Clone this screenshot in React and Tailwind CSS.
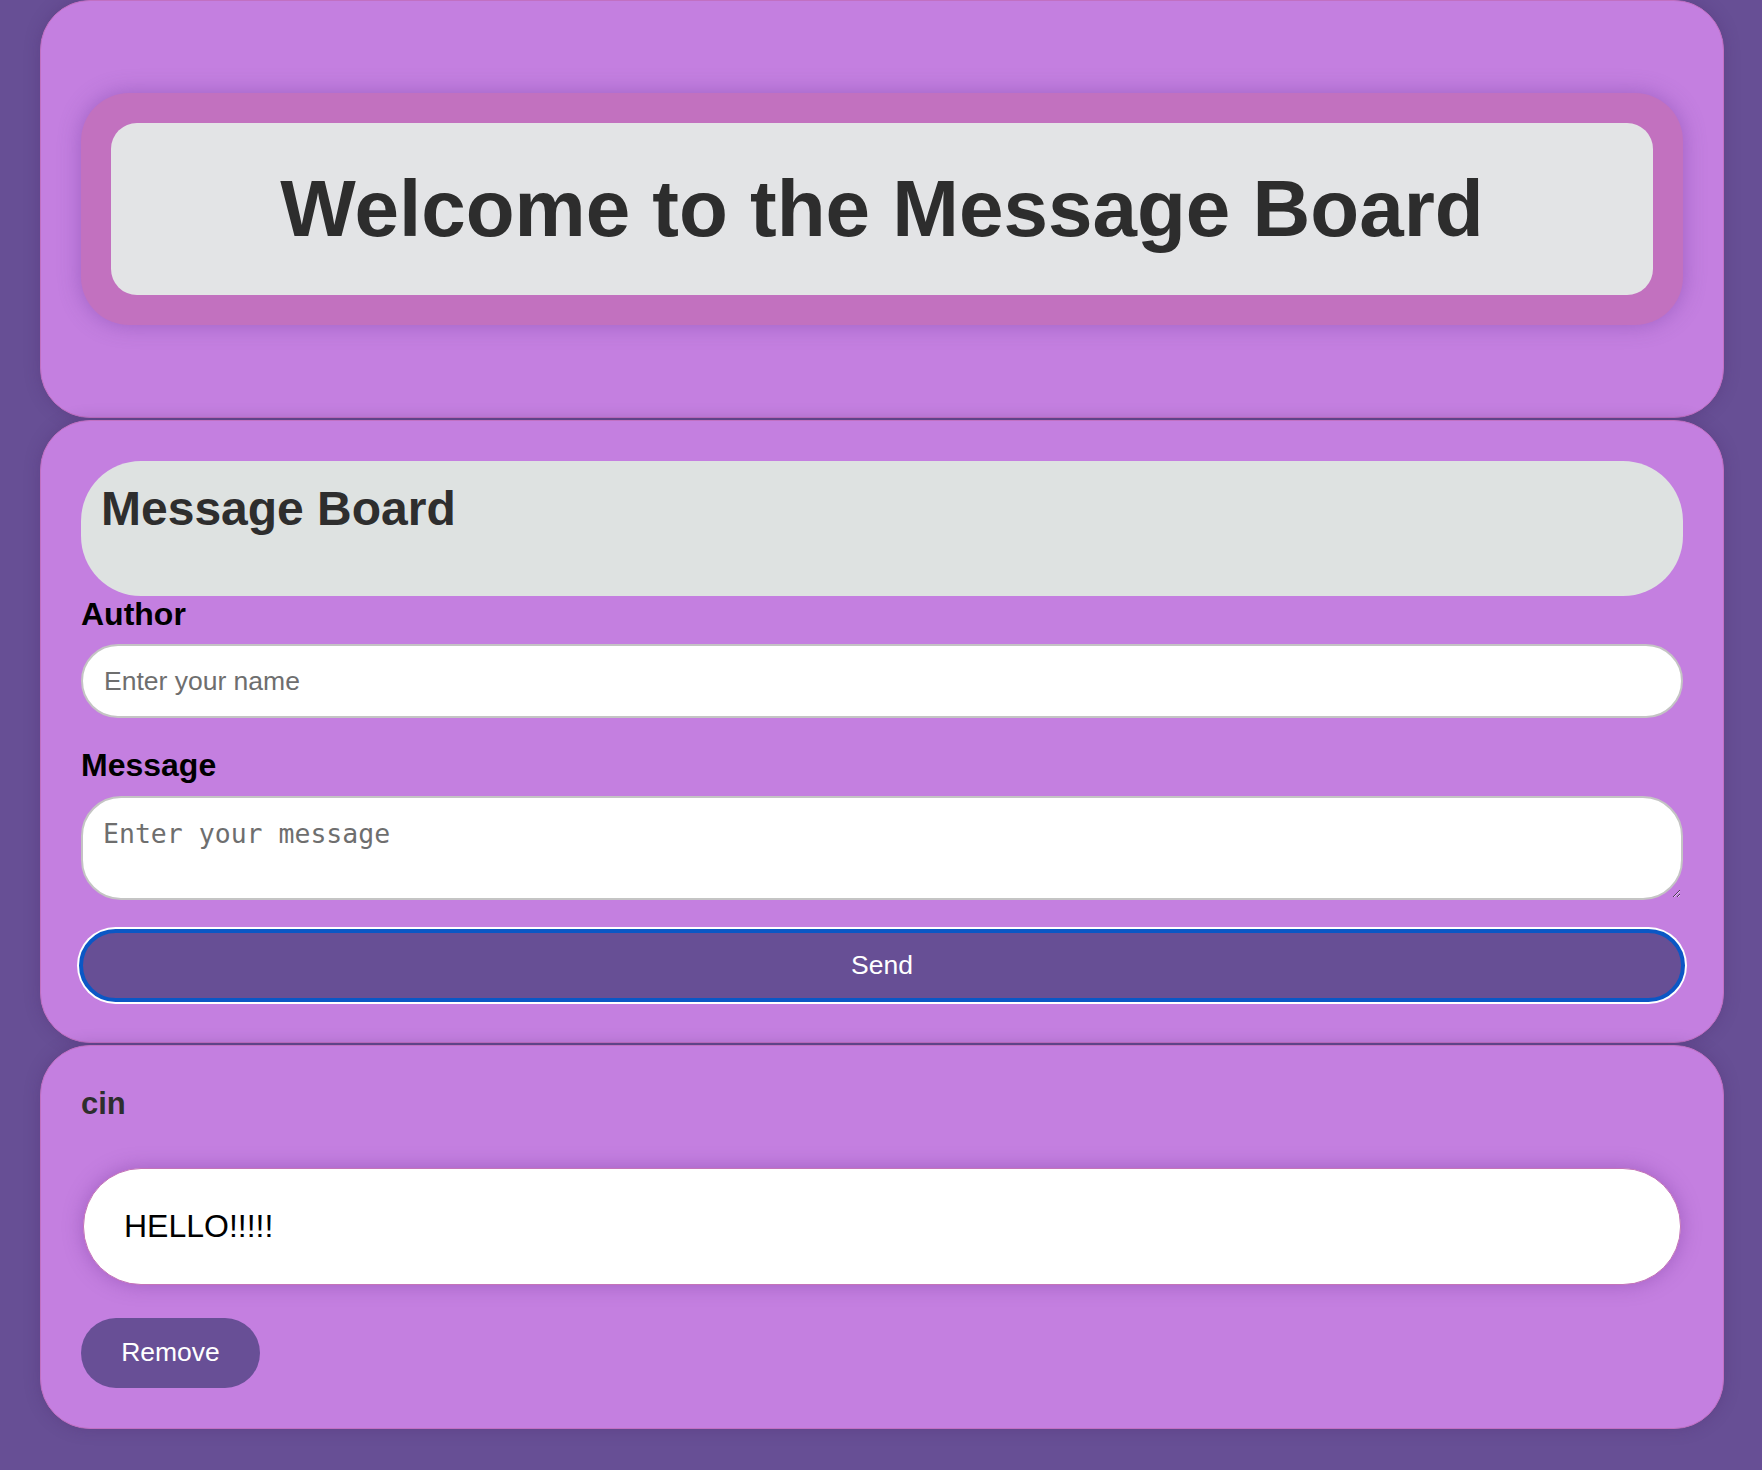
import React from 'react';

const Card = ({ children, className = '' }) => (
  <section
    className={`rounded-[50px] border border-[#c170c2] bg-[#c47fe0] p-10 shadow-[0_0_16px_rgba(70,35,100,0.28)] ${className}`}
  >
    {children}
  </section>
);

export default function App() {
  return (
    <div className="min-h-screen bg-[#674f95] font-['Liberation_Sans',Arial,sans-serif]">
      <div className="ml-10 mr-[38px] flex flex-col gap-[2px]">
        <Card>
          <div className="my-[52px] rounded-[48px] bg-[#c271bf] p-[30px] shadow-[0_0_22px_rgba(110,60,160,0.45)]">
            <h1 className="rounded-[26px] bg-[#e3e4e6] py-10 text-center text-[80px] font-bold leading-[92px] text-[#2d2d2d]">
              Welcome to the Message Board
            </h1>
          </div>
        </Card>

        <Card>
          <div className="h-[135px] rounded-[60px] bg-[#dee2e1] pl-5 pt-5">
            <h2 className="text-[48px] font-bold leading-[55px] text-[#2e2e2e]">Message Board</h2>
          </div>
          <label className="block text-[32px] font-bold leading-[37px] text-black">Author</label>
          <input
            type="text"
            placeholder="Enter your name"
            className="mt-[11px] block h-[74px] w-full rounded-[37px] border-2 border-[#c4c4c4] bg-white px-[21px] text-[26.5px] text-black outline-none placeholder:text-[#6e6e6e]"
          />
          <label className="mt-[29px] block text-[32px] font-bold leading-[37px] text-black">Message</label>
          <textarea
            placeholder="Enter your message"
            className="mt-[12px] block h-[104px] w-full rounded-[40px] border-2 border-[#c4c4c4] bg-white p-5 font-['DejaVu_Sans_Mono',monospace] text-[26.5px] leading-[31px] text-black outline-none placeholder:text-[#6e6e6e]"
          />
          <button className="mx-[-2px] mt-[29px] block h-[73px] w-[calc(100%+4px)] rounded-full border-4 border-[#0b57c5] bg-[#674f95] text-[26.5px] text-white shadow-[0_0_0_2px_#ffffff]">
            Send
          </button>
        </Card>

        <Card>
          <h3 className="text-[31px] font-bold leading-[36px] text-[#2e2e2e]">cin</h3>
          <div className="mx-0.5 mt-[46px] rounded-[58px] border border-[#c474b8] bg-white px-10 py-[39px] text-[32px] leading-[37px] text-black shadow-[0_0_20px_rgba(110,50,150,0.4)]">
            HELLO!!!!!
          </div>
          <button className="mt-[33px] h-[70px] w-[179px] rounded-full bg-[#684f96] text-[26.5px] text-white">
            Remove
          </button>
        </Card>
      </div>
    </div>
  );
}
